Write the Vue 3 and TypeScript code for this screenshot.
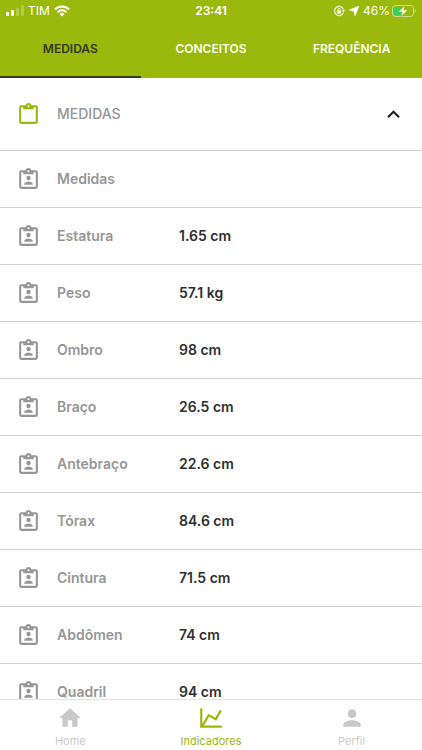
<script setup lang="ts">
import { ref } from 'vue'

interface Measure {
  label: string
  value?: string
}

const tabs: string[] = ['MEDIDAS', 'CONCEITOS', 'FREQUÊNCIA']
const activeTab = ref(0)
const expanded = ref(true)

const measures: Measure[] = [
  { label: 'Medidas' },
  { label: 'Estatura', value: '1.65 cm' },
  { label: 'Peso', value: '57.1 kg' },
  { label: 'Ombro', value: '98 cm' },
  { label: 'Braço', value: '26.5 cm' },
  { label: 'Antebraço', value: '22.6 cm' },
  { label: 'Tórax', value: '84.6 cm' },
  { label: 'Cintura', value: '71.5 cm' },
  { label: 'Abdômen', value: '74 cm' },
  { label: 'Quadril', value: '94 cm' },
]

const clipboard =
  'M19 3h-4.18C14.4 1.84 13.3 1 12 1s-2.4.84-2.82 2H5a2 2 0 0 0-2 2v14a2 2 0 0 0 2 2h14a2 2 0 0 0 2-2V5a2 2 0 0 0-2-2M12 3a1 1 0 1 1 0 2 1 1 0 0 1 0-2M7 7h10V5h2v14H5V5h2z'

const links = [
  { label: 'Home', path: 'M10 20v-6h4v6h5v-8h3L12 3 2 12h3v8z' },
  {
    label: 'Indicadores',
    path: 'M16 11.78l4.24-7.33 1.73 1-5.23 9.05-6.51-3.75L5.46 19H22v2H2V3h2v14.54L9.5 8z',
  },
  {
    label: 'Perfil',
    path: 'M12 4a4 4 0 1 1 0 8 4 4 0 0 1 0-8m0 10c4.42 0 8 1.79 8 4v2H4v-2c0-2.21 3.58-4 8-4',
  },
]
const activeLink = 'Indicadores'
</script>

<template>
  <div class="screen">
    <header class="top">
      <div class="status">
        <div class="side">
          <svg class="signal" width="18" height="12" viewBox="0 0 18 12" aria-hidden="true">
            <rect x="0" y="7" width="3" height="4" rx="1" />
            <rect x="5" y="5" width="3" height="6" rx="1" />
            <rect class="dim" x="10" y="3" width="3" height="8" rx="1" />
            <rect class="dim" x="15" y="0" width="3" height="11" rx="1" />
          </svg>
          <span>TIM</span>
          <svg width="16" height="12" viewBox="0 0 16 12" aria-hidden="true">
            <g fill="none" stroke="#fff" stroke-width="2">
              <path d="M1 4.4a10 10 0 0 1 14 0" />
              <path d="M3.6 7.2a6.2 6.2 0 0 1 8.8 0" />
            </g>
            <path d="M5.5 9a3.6 3.6 0 0 1 5 0L8 11.6z" fill="#fff" />
          </svg>
        </div>
        <time class="clock">23:41</time>
        <div class="side end">
          <svg width="12" height="12" viewBox="0 0 12 12" aria-hidden="true">
            <path d="M10.4 7.6A4.6 4.6 0 1 1 10.4 4.4" fill="none" stroke="#fff" stroke-width="1.1" />
            <path d="M8.9 4.9h3.1l-1.5 2.4z" fill="#fff" />
            <rect x="4" y="5.4" width="4" height="3" rx=".5" fill="#fff" />
            <path d="M4.8 5.5v-.8a1.2 1.2 0 0 1 2.4 0v.8" fill="none" stroke="#fff" stroke-width=".9" />
          </svg>
          <svg width="10" height="10" viewBox="0 0 10 10" aria-hidden="true">
            <path d="M10 0L6 10 4.800 5.200 0 4z" fill="#fff" stroke="#fff" stroke-width=".4" />
          </svg>
          <span class="charge">
            46%
            <svg width="24" height="12" viewBox="0 0 24 12" aria-hidden="true">
              <rect x=".5" y=".5" width="21" height="11" rx="3" fill="none" stroke="#fff" stroke-opacity=".5" />
              <rect x="2" y="2" width="8" height="8" rx="1.5" fill="#35d15b" />
              <path d="M22.500 4v4c1.600-.5 1.600-3.500 0-4" fill="#fff" fill-opacity=".5" />
              <path
                d="M13 .5L6.500 6.900h3.800L9 11.500l6.500-6.400h-3.800z"
                fill="#fff"
                stroke="#9bb80d"
                stroke-width=".5"
              />
            </svg>
          </span>
        </div>
      </div>
      <div class="tabs" role="tablist">
        <button
          v-for="(tab, i) in tabs"
          :key="tab"
          type="button"
          role="tab"
          class="tab"
          :class="{ active: i === activeTab }"
          :aria-selected="i === activeTab"
          @click="activeTab = i"
        >
          {{ tab }}
        </button>
      </div>
    </header>

    <main class="content">
      <button type="button" class="row heading" :aria-expanded="expanded" @click="expanded = !expanded">
        <svg class="icon" viewBox="0 0 24 24" aria-hidden="true"><path :d="clipboard" /></svg>
        <span class="title">MEDIDAS</span>
        <svg class="chevron" :class="{ closed: !expanded }" viewBox="0 0 24 24" aria-hidden="true">
          <path d="M7.400 15.400L12 10.800l4.600 4.600L18 14l-6-6-6 6z" />
        </svg>
      </button>
      <dl v-if="expanded" class="list">
        <div v-for="m in measures" :key="m.label" class="row">
          <svg class="icon" viewBox="0 0 24 24" aria-hidden="true">
            <path :d="clipboard" />
            <circle cx="12" cy="10.500" r="2.100" />
            <path d="M16 17H8v-1c0-1.330 2.670-2.200 4-2.200s4 .87 4 2.200z" />
          </svg>
          <dt>{{ m.label }}</dt>
          <dd>{{ m.value }}</dd>
        </div>
      </dl>
    </main>

    <nav class="bottom">
      <a
        v-for="l in links"
        :key="l.label"
        href="#"
        class="link"
        :class="{ current: l.label === activeLink }"
      >
        <svg viewBox="0 0 24 24" aria-hidden="true"><path :d="l.path" /></svg>
        <span>{{ l.label }}</span>
      </a>
    </nav>
  </div>
</template>

<style>
body {
  margin: 0;
  background: #fff;
}
</style>

<style scoped>
.screen {
  display: flex;
  flex-direction: column;
  height: 100vh;
  overflow: hidden;
  background: #fff;
  font-family: Inter, Roboto, sans-serif;
}
button {
  border: 0;
  margin: 0;
  background: none;
  font-family: inherit;
  text-align: left;
  cursor: pointer;
}
.top {
  flex: none;
  background: #9bb80d;
  color: #fff;
}
.status {
  display: flex;
  align-items: center;
  height: 21px;
  padding: 0 6px;
  font-size: 12px;
  line-height: 20px;
}
.side {
  display: flex;
  flex: 1;
  align-items: center;
  gap: 4px;
}
.end {
  justify-content: flex-end;
}
.charge {
  display: flex;
  gap: 2px;
  align-items: center;
}
.signal {
  fill: #fff;
}
.dim {
  opacity: 0.25;
}
.clock {
  font-weight: 600;
}
.tabs {
  display: grid;
  grid-template-columns: repeat(3, 1fr);
}
.tab {
  height: 57px;
  padding: 0;
  border-bottom: 2px solid transparent;
  color: #fbfde9;
  font-size: 12px;
  font-weight: 600;
  text-align: center;
}
.active {
  border-color: #35391f;
  color: #35391f;
}
.content {
  flex: 1;
  min-height: 0;
  overflow: hidden;
}
.list {
  margin: 0;
}
.row {
  display: grid;
  grid-template-columns: 25px 106px 1fr;
  gap: 16px;
  align-items: center;
  box-sizing: border-box;
  width: 100%;
  height: 57px;
  padding: 0 16px;
  border-bottom: 1px solid #d2d2d2;
  font-size: 14px;
  line-height: 20px;
}
.heading {
  grid-template-columns: 25px 1fr 25px;
  height: 73px;
}
.icon {
  width: 25px;
  height: 25px;
  fill: #969696;
}
.heading .icon {
  fill: #9bb80d;
}
.title {
  color: #969696;
  font-weight: 500;
}
.chevron {
  width: 25px;
  height: 25px;
  fill: #222;
}
.closed {
  transform: rotate(180deg);
}
dt {
  color: #969696;
  font-weight: 600;
}
dd {
  margin: 0;
  color: #2e2e2e;
  font-weight: 600;
}
.bottom {
  display: grid;
  flex: none;
  grid-template-columns: repeat(3, 1fr);
  border-top: 1px solid #e4e4e4;
  background: #fff;
}
.link {
  display: flex;
  flex-direction: column;
  gap: 2px;
  align-items: center;
  padding: 5px 0 1px;
  color: #c8c8c8;
  font-size: 11px;
  line-height: 16px;
  text-decoration: none;
}
.link svg {
  width: 26px;
  height: 26px;
  fill: currentColor;
}
.current {
  color: #9bb80d;
}
</style>
